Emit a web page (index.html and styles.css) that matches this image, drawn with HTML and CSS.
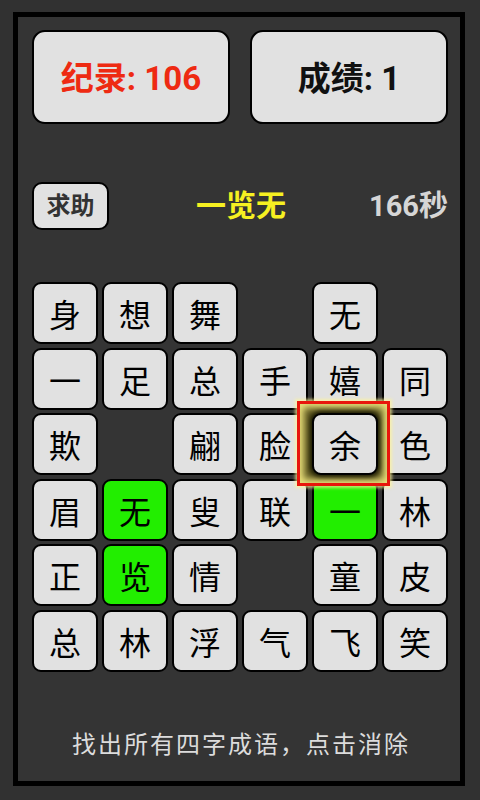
FILE: index.html
```html
<!DOCTYPE html>
<html lang="zh">
<head>
<meta charset="utf-8">
<link rel="stylesheet" href="styles.css">
</head>
<body>
<div class="frame">
  <div class="scores">
    <div class="card record">纪录: 106</div>
    <div class="card score">成绩: 1</div>
  </div>
  <div class="status">
    <div class="help">求助</div>
    <div class="found">一览无</div>
    <div class="timer">166秒</div>
  </div>
  <div class="grid">
    <div class="cell">身</div><div class="cell">想</div><div class="cell">舞</div><div class="blank"></div><div class="cell">无</div><div class="blank"></div>
    <div class="cell">一</div><div class="cell">足</div><div class="cell">总</div><div class="cell">手</div><div class="cell">嬉</div><div class="cell">同</div>
    <div class="cell">欺</div><div class="blank"></div><div class="cell">翩</div><div class="cell">脸</div><div class="cell selected"><span class="halo"></span><span class="ch">余</span></div><div class="cell">色</div>
    <div class="cell">眉</div><div class="cell on">无</div><div class="cell">叟</div><div class="cell">联</div><div class="cell on">一</div><div class="cell">林</div>
    <div class="cell">正</div><div class="cell on">览</div><div class="cell">情</div><div class="blank"></div><div class="cell">童</div><div class="cell">皮</div>
    <div class="cell">总</div><div class="cell">林</div><div class="cell">浮</div><div class="cell">气</div><div class="cell">飞</div><div class="cell">笑</div>
  </div>
  <div class="hint">找出所有四字成语，点击消除</div>
</div>
</body>
</html>
```
FILE: styles.css
```css
html, body {
  margin: 0;
  padding: 0;
  background: #313131;
}
body {
  width: 480px;
  height: 800px;
  font-family: "Roboto", "Noto Sans CJK SC", sans-serif;
}
.frame {
  box-sizing: border-box;
  margin: 12px 15px 0 13px;
  width: 452px;
  height: 774px;
  border: 5px solid #000;
  background: #343434;
  padding: 13px 12px 0 14px;
  display: flex;
  flex-direction: column;
}
.scores {
  display: flex;
  gap: 20px;
}
.card {
  box-sizing: border-box;
  width: 198px;
  height: 94px;
  background: #e1e1e1;
  border: 2px solid #000;
  border-radius: 13px;
  display: flex;
  align-items: center;
  justify-content: center;
  font-size: 33px;
  font-weight: 700;
  line-height: 1;
  padding-top: 2px;
}
.record { color: #ee2a12; }
.score { color: #111; }
.status {
  margin-top: 58px;
  height: 48px;
  display: flex;
  align-items: center;
  justify-content: space-between;
}
.help {
  box-sizing: border-box;
  width: 77px;
  height: 48px;
  background: #e1e1e1;
  border: 2px solid #000;
  border-radius: 10px;
  display: flex;
  align-items: center;
  justify-content: center;
  font-size: 24px;
  font-weight: 700;
  color: #333;
  line-height: 1;
}
.found {
  font-size: 30px;
  font-weight: 700;
  color: #f6f021;
  line-height: 1;
  margin-left: 4px;
}
.timer {
  font-size: 29px;
  font-weight: 700;
  color: #d6d6d6;
  line-height: 1;
}
.grid {
  margin-top: 52px;
  display: grid;
  grid-template-columns: repeat(6, 66px);
  grid-auto-rows: 62px;
  column-gap: 4px;
  row-gap: 3.6px;
}
.cell {
  position: relative;
  box-sizing: border-box;
  background: #e1e1e1;
  border: 2px solid #000;
  border-radius: 9px;
  display: flex;
  align-items: center;
  justify-content: center;
  font-family: "Noto Sans CJK SC", sans-serif;
  font-size: 32px;
  color: #000;
  line-height: 1;
}
.cell.on {
  background: #22ee00;
}
.cell.selected {
  z-index: 1;
}
.halo {
  position: absolute;
  top: -14px;
  bottom: -13px;
  left: -17px;
  right: -14px;
  border: 3px solid #e8160c;
  background: #58521e;
  box-shadow: 0 0 3px 2px rgba(255, 245, 150, 0.7), inset 0 0 7px 4px #ece27a;
  z-index: -1;
}
.selected .ch {
  position: relative;
}
.selected::before {
  content: "";
  position: absolute;
  inset: -2px;
  border-radius: 9px;
  background: #e1e1e1;
  border: 2px solid #000;
  box-shadow: 0 0 4px 2px rgba(20, 20, 0, 0.9);
}
.hint {
  margin-top: 59px;
  text-align: center;
  font-family: "Noto Sans CJK SC", sans-serif;
  font-size: 24px;
  letter-spacing: 2px;
  color: #dcdcdc;
  line-height: 1;
  padding-left: 2px;
}
```
